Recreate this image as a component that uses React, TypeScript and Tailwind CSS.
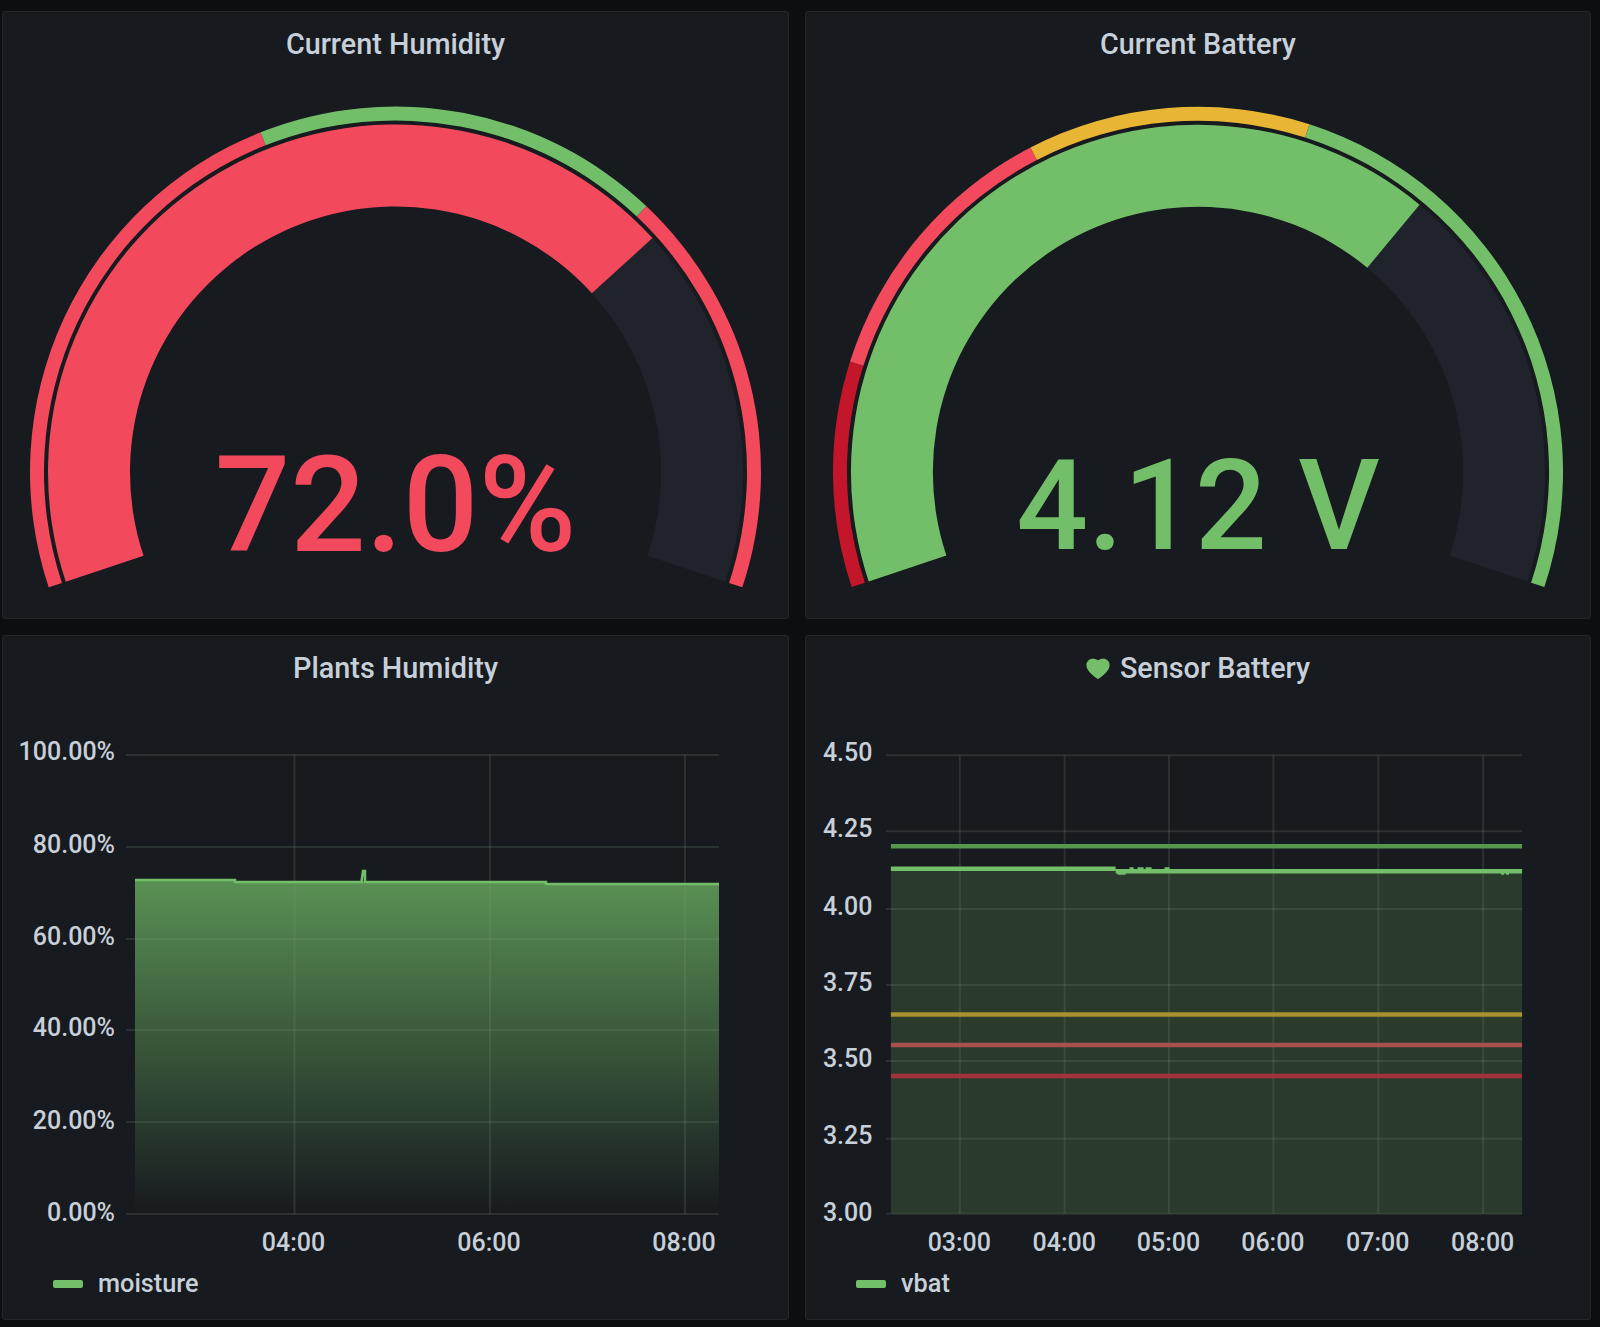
import React from 'react';

const RED = '#f2495c';
const GREEN = '#73bf69';
const DARK_RED = '#c4162a';
const YELLOW = '#e8b634';
const TRACK = '#20232b';

const SPAN = 216.8;

// annular sector, f0/f1 are fractions of the gauge sweep
function sector(cx: number, cy: number, rOut: number, rIn: number, f0: number, f1: number) {
  const a0 = ((-108.4 + f0 * SPAN - 90) * Math.PI) / 180;
  const a1 = ((-108.4 + f1 * SPAN - 90) * Math.PI) / 180;
  const large = (f1 - f0) * SPAN > 180 ? 1 : 0;
  const p = (r: number, a: number) => `${(cx + r * Math.cos(a)).toFixed(2)} ${(cy + r * Math.sin(a)).toFixed(2)}`;
  return `M${p(rOut, a0)} A${rOut} ${rOut} 0 ${large} 1 ${p(rOut, a1)} L${p(rIn, a1)} A${rIn} ${rIn} 0 ${large} 0 ${p(rIn, a0)} Z`;
}

interface GaugeProps {
  cx: number;
  left: number;
  value: number;
  color: string;
  bands: { from: number; to: number; color: string }[];
  label: string;
  fontSize: number;
  baseline: number;
}

const CY = 472;

const Gauge: React.FC<GaugeProps> = ({ cx, left, value, color, bands, label, fontSize, baseline }) => (
  <svg className="block w-full flex-1" viewBox={`${left} 77 785 541`}>
    {bands.map(b => (
      <path key={b.from} d={sector(cx, CY, 365.5, 351.5, b.from, b.to)} fill={b.color} />
    ))}
    <path d={sector(cx, CY, 347.5, 265.5, value, 1)} fill={TRACK} />
    <path d={sector(cx, CY, 347.5, 265.5, 0, value)} fill={color} />
    <text x={cx} y={baseline} textAnchor="middle" fontSize={fontSize} fontWeight={500} fill={color}>
      {label}
    </text>
  </svg>
);

const Panel: React.FC<{ title: string; icon?: React.ReactNode; children: React.ReactNode }> = ({ title, icon, children }) => (
  <div className="flex flex-col min-h-0 bg-[#171a1f] border border-[#23262b] rounded-[3px]">
    <div className="h-[65px] shrink-0 flex items-center justify-center gap-[10px] text-[28.8px] font-medium text-[#c7d0d9]">
      {icon}
      <span>{title}</span>
    </div>
    {children}
  </div>
);

const Legend: React.FC<{ name: string }> = ({ name }) => (
  <div className="h-[44px] mb-[13px] shrink-0 flex items-center pl-[50px] gap-[15px] text-[25.3px] font-medium text-[#c7d0d9]">
    <span className="w-[30px] h-[8px] rounded-[2px] bg-[#73bf69]" />
    <span>{name}</span>
  </div>
);

const GRID = 'rgba(130,150,130,0.19)';
const AXIS = '#c7d0d9';

const HumidityChart: React.FC = () => {
  const rows: [string, number, number][] = [
    ['100.00%', 755, 760], ['80.00%', 847, 853], ['60.00%', 939, 945], ['40.00%', 1030, 1036], ['20.00%', 1122, 1129], ['0.00%', 1214, 1221],
  ];
  const cols: [string, number][] = [['04:00', 294.5], ['06:00', 490], ['08:00', 685]];
  return (
    <svg className="block w-full flex-1" viewBox="3 701 785 561">
      <defs>
        <linearGradient id="moist" x1="0" y1="880" x2="0" y2="1214" gradientUnits="userSpaceOnUse">
          <stop offset="0" stopColor="#73bf69" stopOpacity="0.72" />
          <stop offset="1" stopColor="#73bf69" stopOpacity="0" />
        </linearGradient>
      </defs>
      <path d="M135 1214 V879 H235 V881 H546 V883 H719 V1214 Z" fill="url(#moist)" />
      {rows.map(([t, y, base]) => (
        <g key={t}>
          <line x1="126" x2="719" y1={y} y2={y} stroke={GRID} strokeWidth="2" />
          <text x="115" y={base} textAnchor="end" fontSize="25" fontWeight={500} fill={AXIS}>{t}</text>
        </g>
      ))}
      {cols.map(([t, x]) => (
        <g key={t}>
          <line x1={x} x2={x} y1="755" y2="1214" stroke={GRID} strokeWidth="2" />
          <text x={x - 1} y="1251" textAnchor="middle" fontSize="25" fontWeight={500} fill={AXIS}>{t}</text>
        </g>
      ))}
      <path d="M135 880 H235 V882 H361.5 L363 871 H365 V882 H546 V884 H719" fill="none" stroke={GREEN} strokeWidth="2.5" />
    </svg>
  );
};

const BatteryChart: React.FC = () => {
  const rows: [string, number, number][] = [
    ['4.50', 755, 761], ['4.25', 831, 837], ['4.00', 909, 915], ['3.75', 985, 991], ['3.50', 1061, 1067], ['3.25', 1139, 1144], ['3.00', 1214, 1221],
  ];
  const cols: [string, number][] = [
    ['03:00', 960], ['04:00', 1065], ['05:00', 1169.5], ['06:00', 1274], ['07:00', 1379], ['08:00', 1484],
  ];
  return (
    <svg className="block w-full flex-1" viewBox="806 701 785 561">
      <path d="M891 1214 V869 H1116 V871 H1523 V1214 Z" fill="#2a3b2e" />
      {rows.map(([t, y, base]) => (
        <g key={t}>
          <line x1="886" x2="1523" y1={y} y2={y} stroke={GRID} strokeWidth="2" />
          <text x="872.5" y={base} textAnchor="end" fontSize="25" fontWeight={500} fill={AXIS}>{t}</text>
        </g>
      ))}
      {cols.map(([t, x]) => (
        <g key={t}>
          <line x1={x} x2={x} y1="755" y2="1214" stroke={GRID} strokeWidth="2" />
          <text x={x - 0.5} y="1251" textAnchor="middle" fontSize="25" fontWeight={500} fill={AXIS}>{t}</text>
        </g>
      ))}
      <line x1="891" x2="1523" y1="846" y2="846" stroke="#57984f" strokeWidth="4.5" />
      <line x1="891" x2="1523" y1="1014.5" y2="1014.5" stroke="#a8912e" strokeWidth="4.5" />
      <line x1="891" x2="1523" y1="1045" y2="1045" stroke="#a9514d" strokeWidth="4.5" />
      <line x1="891" x2="1523" y1="1076" y2="1076" stroke="#a3333b" strokeWidth="4.5" />
      <path d="M891 868.7 H1116 M1116 871 H1523" fill="none" stroke={GREEN} strokeWidth="4.5" />
      <path d="M1118 873.5 H1126 M1130 868 H1134 M1138 868 H1144 M1146 868 H1152 M1165 868 H1170 M1502 873.5 H1505 M1507 873.5 H1510" stroke={GREEN} strokeWidth="2" />
    </svg>
  );
};

const Heart: React.FC = () => (
  <svg width="24" height="22" viewBox="0 0 25 22" className="shrink-0">
    <path
      d="M12.5 21.8 C11 20.6 0.4 14.2 0.4 7.2 C0.4 3 3.6 0.4 7 0.4 C9.4 0.4 11.4 1 12.5 2 C13.6 1 15.6 0.4 18 0.4 C21.4 0.4 24.6 3 24.6 7.2 C24.6 14.2 14 20.6 12.5 21.8 Z"
      fill="#73bf69"
    />
  </svg>
);

export default function App() {
  return (
    <div className="w-[1600px] h-[1327px] overflow-hidden bg-[#0c0e12] pt-[11px] pl-[2px] pr-[9px] pb-[8px] grid grid-cols-[787px_786px] grid-rows-[608px_685px] gap-x-[16px] gap-y-[16px] [font-family:Roboto,sans-serif]">
      <Panel title="Current Humidity">
        <Gauge
          cx={395.5}
          left={3}
          value={0.72}
          color={RED}
          bands={[
            { from: 0, to: 0.4, color: RED },
            { from: 0.4, to: 0.7, color: GREEN },
            { from: 0.7, to: 1, color: RED },
          ]}
          label="72.0%"
          fontSize={133}
          baseline={551}
        />
      </Panel>
      <Panel title="Current Battery">
        <Gauge
          cx={1198.5}
          left={806}
          value={0.683}
          color={GREEN}
          bands={[
            { from: 0, to: 0.166, color: DARK_RED },
            { from: 0.166, to: 0.374, color: RED },
            { from: 0.374, to: 0.582, color: YELLOW },
            { from: 0.582, to: 1, color: GREEN },
          ]}
          label="4.12 V"
          fontSize={126.5}
          baseline={549}
        />
      </Panel>
      <Panel title="Plants Humidity">
        <HumidityChart />
        <Legend name="moisture" />
      </Panel>
      <Panel title="Sensor Battery" icon={<Heart />}>
        <BatteryChart />
        <Legend name="vbat" />
      </Panel>
    </div>
  );
}
